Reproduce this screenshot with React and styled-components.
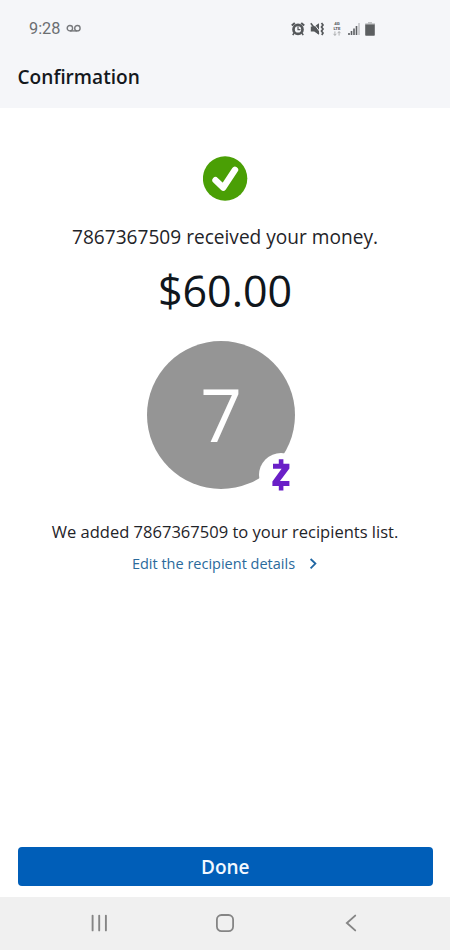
import React from 'react';
import styled, { createGlobalStyle } from 'styled-components';

const GlobalStyle = createGlobalStyle`
  body {
    margin: 0;
    background: #ffffff;
  }
  * {
    box-sizing: border-box;
  }
`;

const Screen = styled.div`
  display: flex;
  flex-direction: column;
  width: 450px;
  height: 950px;
  overflow: hidden;
  background: #ffffff;
  color: #1f2429;
  font-family: "Open Sans", "Noto Sans", sans-serif;
`;

const Header = styled.header`
  height: 108px;
  background: #f5f6f9;
`;

const StatusBar = styled.div`
  display: flex;
  align-items: center;
  justify-content: space-between;
  height: 57px;
  padding: 0 75px 0 29px;
`;

const StatusGroup = styled.div`
  display: flex;
  align-items: center;
  gap: ${props => props.gap}px;
`;

const Clock = styled.span`
  color: #6b6e71;
  font-family: Roboto, sans-serif;
  font-size: 16.3px;
  line-height: 20px;
`;

const Title = styled.h1`
  margin: 0;
  padding: 0 0 0 17.5px;
  color: #14181d;
  font-size: 19.1px;
  font-weight: 600;
  line-height: 41px;
`;

const Content = styled.main`
  flex: 1;
  display: flex;
  flex-direction: column;
  align-items: center;
  padding-top: 48px;
`;

const Message = styled.p`
  margin: 21px 0 0;
  font-size: 19.1px;
  line-height: 30px;
  white-space: nowrap;
`;

const Amount = styled.div`
  margin-top: 9px;
  color: #10161c;
  font-size: 43px;
  line-height: 60px;
`;

const Avatar = styled.div`
  position: relative;
  display: flex;
  justify-content: center;
  width: 148px;
  height: 148px;
  margin: 20.4px 8px 0 0;
  border-radius: 50%;
  background: #959595;
  color: #ffffff;
  font-size: 73px;
  line-height: 146px;
`;

const Badge = styled.div`
  position: absolute;
  right: -8px;
  bottom: -8px;
  display: flex;
  align-items: center;
  justify-content: center;
  width: 44px;
  height: 44px;
  border-radius: 50%;
  background: #ffffff;
`;

const Note = styled.p`
  margin: 28.6px 0 0;
  font-size: 16.55px;
  line-height: 28px;
  white-space: nowrap;
`;

const EditLink = styled.a`
  display: flex;
  align-items: center;
  gap: 14px;
  margin: 6px 1px 0 0;
  color: #2a6a9c;
  font-size: 14.5px;
  line-height: 24px;
`;

const Footer = styled.footer`
  padding: 0 17px 11px 17.5px;
`;

const DoneButton = styled.button`
  display: block;
  width: 100%;
  height: 39px;
  padding: 1px 0 0;
  border: 0;
  border-radius: 4px;
  background: #005eb8;
  color: #f2f8ff;
  font-family: inherit;
  font-size: 19px;
  font-weight: 600;
  line-height: 38px;
`;

const NavBar = styled.nav`
  display: flex;
  align-items: center;
  justify-content: space-between;
  height: 53px;
  padding: 0 89px 1px;
  background: #f0f0f0;
`;

const VoicemailIcon = () => (
  <svg width="15" height="9" viewBox="0 0 15 9" fill="none" stroke="#77797c" strokeWidth="1.4">
    <circle cx="3.9" cy="4.2" r="2.7" />
    <circle cx="11.4" cy="4.2" r="2.7" />
    <path d="M3.9 6.9h7.5" />
  </svg>
);

const AlarmIcon = () => (
  <svg width="14" height="14" viewBox="0 0 14 14" fill="none" stroke="#55585b">
    <circle cx="7" cy="7.4" r="4.5" strokeWidth="2.7" />
    <path d="M.8 3.6L3.8 1M13.2 3.6L10.2 1" strokeWidth="2" />
    <path d="M7 4.5v3.2h2.4" strokeWidth="1.2" />
    <path d="M3 11.2l-1.2 2M11 11.2l1.2 2" strokeWidth="1.6" />
  </svg>
);

const MuteIcon = () => (
  <svg width="15" height="14" viewBox="0 0 15 14" fill="none" stroke="#55585b">
    <path d="M.8 4.4h3.4L9 1.2v11.6L4.2 9.6H.8z" fill="#55585b" stroke="none" />
    <path d="M2.8 .4l8 10.4" stroke="#f5f6f9" strokeWidth="1" />
    <path d="M.8 1.2l8 10.6" strokeWidth="1.6" />
    <path d="M11.5 1l1.5 2-1.5 2L13 7l-1.5 2 1.5 2-1.2 2" strokeWidth="1.7" />
  </svg>
);

const Network = styled.div`
  display: flex;
  flex-direction: column;
  align-items: center;
  width: 10px;
  margin: 0 1px 1px 2px;
`;

const NetworkLabel = styled.span`
  color: #505356;
  font-family: Roboto, sans-serif;
  font-size: 4.4px;
  font-weight: 700;
  line-height: 5px;
`;

// 4G over LTE, with the data arrows below
const NetworkIcon = () => (
  <Network>
    <NetworkLabel>4G</NetworkLabel>
    <NetworkLabel>LTE</NetworkLabel>
    <svg width="10" height="5" viewBox="0 0 10 6" fill="none" stroke="#a9abad" strokeWidth="1.1">
      <path d="M2.5 .5v4.8M.8 3.4l1.7 1.9 1.7-1.9M7.5 5.5V.8M5.8 2.6L7.5.7l1.7 1.9" />
    </svg>
  </Network>
);

const SignalIcon = () => (
  <svg width="12" height="12" viewBox="0 0 12 12" fill="#5c5f62">
    <path d="M.2 10h1.6v2H.2zM2.7 8h1.6v4H2.7zM5.2 5.5h1.6V12H5.2zM7.7 3h1.6v9H7.7z" />
    <path d="M10.2 0h1.6v12h-1.6z" fill="#c3c5c7" />
  </svg>
);

const BatteryIcon = () => (
  <svg width="10" height="14" viewBox="0 0 10 14">
    <path d="M3 0h4v1.2h3V3H.2V1.2H3z" fill="#bfc1c3" />
    <path d="M.2 2.6h9.6V13a.7.7 0 0 1-.7.7H.9a.7.7 0 0 1-.7-.7z" fill="#5c5f61" />
  </svg>
);

const CheckIcon = () => (
  <svg width="45" height="45" viewBox="0 0 45 45" fill="none">
    <circle cx="22.1" cy="22.5" r="22.2" fill="#4a9f05" />
    <path
      d="M12.5 24.2l7.8 7.4L32 13.8"
      stroke="#ffffff"
      strokeWidth="6.4"
      strokeLinecap="round"
      strokeLinejoin="round"
    />
  </svg>
);

const ZelleIcon = () => (
  <svg width="18" height="32" viewBox="0 0 18 32" fill="#6a1fc7">
    <path d="M6.8 .2h4.6v4.6h6v4.8L8 22h9.4v5h-6v4.5H6.8V27H.4v-4.6L9.6 9.8H1V4.8h5.8z" />
  </svg>
);

const ChevronIcon = () => (
  <svg width="8" height="12" viewBox="0 0 8 12" fill="none" stroke="#1f66a3" strokeWidth="1.8">
    <path d="M1.6 1L6.4 5.6l-4.8 4.8" />
  </svg>
);

const RecentsIcon = () => (
  <svg width="20" height="20" viewBox="0 0 20 20" stroke="#858585" strokeWidth="1.9" strokeLinecap="round">
    <path d="M3.6 2.6v14.8M10.2 2.6v14.8M16.9 2.6v14.8" />
  </svg>
);

const HomeIcon = () => (
  <svg width="20" height="20" viewBox="0 0 20 20" fill="none" stroke="#858585" strokeWidth="1.8">
    <rect x="1.9" y="2" width="16.2" height="16.2" rx="4.6" />
  </svg>
);

const BackIcon = () => (
  <svg width="20" height="20" viewBox="0 0 20 20" fill="none" stroke="#858585" strokeWidth="1.9" strokeLinecap="round">
    <path d="M14.2 2.6L5.9 10l8.3 7.4" />
  </svg>
);

const App = () => (
  <Screen>
    <GlobalStyle />
    <Header>
      <StatusBar>
        <StatusGroup gap={6}>
          <Clock>9:28</Clock>
          <VoicemailIcon />
        </StatusGroup>
        <StatusGroup gap={5}>
          <AlarmIcon />
          <MuteIcon />
          <NetworkIcon />
          <SignalIcon />
          <BatteryIcon />
        </StatusGroup>
      </StatusBar>
      <Title>Confirmation</Title>
    </Header>
    <Content>
      <CheckIcon />
      <Message>7867367509 received your money.</Message>
      <Amount>$60.00</Amount>
      <Avatar>
        7
        <Badge>
          <ZelleIcon />
        </Badge>
      </Avatar>
      <Note>We added 7867367509 to your recipients list.</Note>
      <EditLink>
        Edit the recipient details
        <ChevronIcon />
      </EditLink>
    </Content>
    <Footer>
      <DoneButton>Done</DoneButton>
    </Footer>
    <NavBar>
      <RecentsIcon />
      <HomeIcon />
      <BackIcon />
    </NavBar>
  </Screen>
);

export default App;
